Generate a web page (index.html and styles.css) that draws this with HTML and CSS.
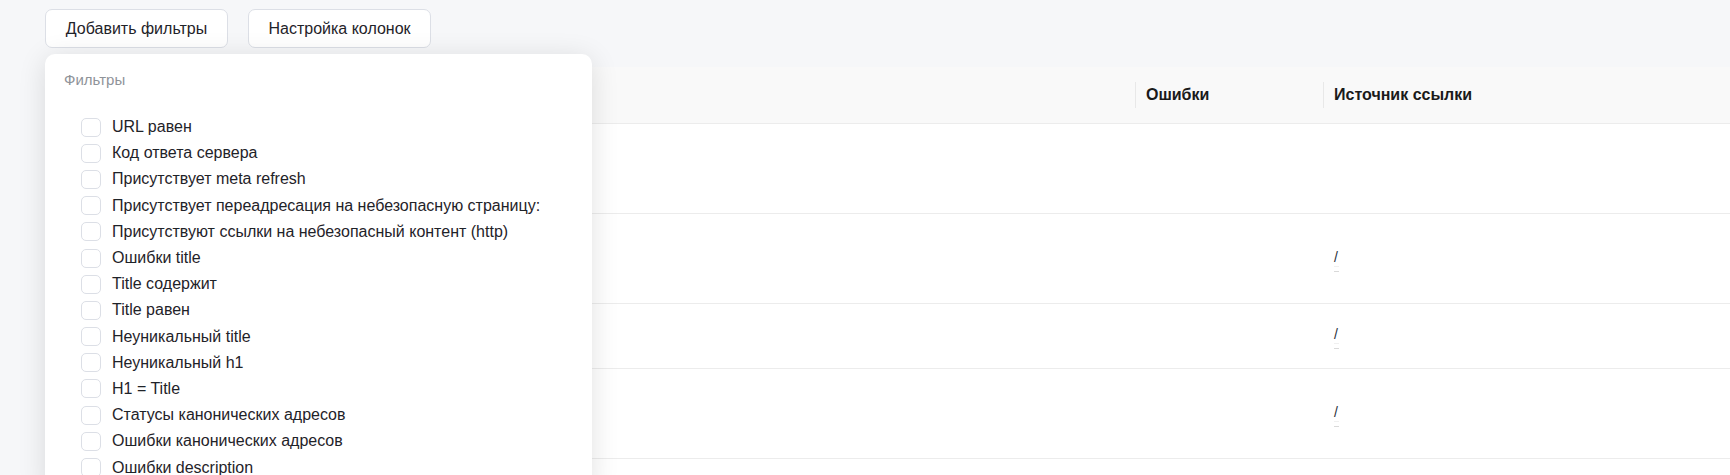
FILE: index.html
```html
<!DOCTYPE html>
<html lang="ru">
<head>
<meta charset="utf-8">
<title>Фильтры</title>
<link rel="stylesheet" href="styles.css">
</head>
<body>
<div class="page">
  <div class="toolbar">
    <button class="btn">Добавить фильтры</button>
    <button class="btn">Настройка колонок</button>
  </div>

  <div class="table">
    <div class="row head">
      <div class="cell c-main"></div>
      <div class="cell c-err"><span class="sep"></span>Ошибки</div>
      <div class="cell c-src"><span class="sep"></span>Источник ссылки</div>
    </div>
    <div class="row h90">
      <div class="cell c-main"></div>
      <div class="cell c-err"></div>
      <div class="cell c-src"></div>
    </div>
    <div class="row h90">
      <div class="cell c-main"></div>
      <div class="cell c-err"></div>
      <div class="cell c-src"><div class="src"><a class="slash">/</a><span class="tail"></span></div></div>
    </div>
    <div class="row h65">
      <div class="cell c-main"></div>
      <div class="cell c-err"></div>
      <div class="cell c-src"><div class="src"><a class="slash">/</a><span class="tail"></span></div></div>
    </div>
    <div class="row h90">
      <div class="cell c-main"></div>
      <div class="cell c-err"></div>
      <div class="cell c-src"><div class="src"><a class="slash">/</a><span class="tail"></span></div></div>
    </div>
    <div class="row h90">
      <div class="cell c-main"></div>
      <div class="cell c-err"></div>
      <div class="cell c-src"></div>
    </div>
  </div>

  <div class="dropdown">
    <div class="dd-title">Фильтры</div>
    <ul class="dd-list">
      <li class="opt"><span class="box"></span>URL равен</li>
      <li class="opt"><span class="box"></span>Код ответа сервера</li>
      <li class="opt"><span class="box"></span>Присутствует meta refresh</li>
      <li class="opt"><span class="box"></span>Присутствует переадресация на небезопасную страницу:</li>
      <li class="opt"><span class="box"></span>Присутствуют ссылки на небезопасный контент (http)</li>
      <li class="opt"><span class="box"></span>Ошибки title</li>
      <li class="opt"><span class="box"></span>Title содержит</li>
      <li class="opt"><span class="box"></span>Title равен</li>
      <li class="opt"><span class="box"></span>Неуникальный title</li>
      <li class="opt"><span class="box"></span>Неуникальный h1</li>
      <li class="opt"><span class="box"></span>H1 = Title</li>
      <li class="opt"><span class="box"></span>Статусы канонических адресов</li>
      <li class="opt"><span class="box"></span>Ошибки канонических адресов</li>
      <li class="opt"><span class="box"></span>Ошибки description</li>
    </ul>
  </div>
</div>
</body>
</html>
```

FILE: styles.css
```css
* { box-sizing: border-box; }

html, body {
  margin: 0;
  padding: 0;
  height: 100%;
  overflow: hidden;
}

body {
  background: #f6f7f9;
  font-family: "Liberation Sans", Arial, sans-serif;
  color: #1f2329;
}

.page {
  position: relative;
  padding: 9px 0 0 45px;
}

.toolbar {
  display: flex;
  gap: 20px;
}

.btn {
  width: 183px;
  height: 39px;
  padding: 0 16px;
  background: #ffffff;
  border: 1px solid #dcdfe6;
  border-radius: 7px;
  font-family: "Liberation Sans", Arial, sans-serif;
  font-size: 16px;
  color: #1f2329;
  cursor: pointer;
}

.table {
  margin-top: 19px;
  background: #ffffff;
}

.row {
  display: flex;
  border-bottom: 1px solid #ececec;
}

.row.head {
  height: 57px;
  background: #f9f9f9;
  font-weight: bold;
  font-size: 16px;
  color: #1a1a1a;
}

.row.h90 { height: 90px; }
.row.h65 { height: 65px; }

.cell {
  position: relative;
  display: flex;
  align-items: center;
  padding: 0 11px;
}

.c-main { width: 1090px; }
.c-err { width: 188px; }
.c-src { flex: 1; }

.sep {
  position: absolute;
  left: 0;
  top: 15px;
  width: 1px;
  height: 26px;
  background: #e8e8e8;
}

.src {
  display: flex;
  flex-direction: column;
  align-items: flex-start;
  padding-top: 4px;
}

.slash {
  font-size: 14px;
  line-height: 14px;
  color: #2a2f3a;
}

.tail {
  display: block;
  width: 5px;
  height: 6px;
  margin-top: 2px;
  border-top: 1px solid #f0f0f0;
  border-bottom: 1px solid #d9d9d9;
}

.dropdown {
  position: absolute;
  left: 45px;
  top: 54px;
  width: 547px;
  height: 440px;
  background: #ffffff;
  border-radius: 10px;
  box-shadow: 0 4px 28px rgba(0, 0, 0, 0.12);
  padding: 16px 0 0 19px;
  overflow: hidden;
}

.dd-title {
  font-size: 15px;
  line-height: 20px;
  color: #8f9399;
}

.dd-list {
  list-style: none;
  margin: 24px 0 0 0;
  padding: 0 0 0 17px;
}

.opt {
  display: flex;
  align-items: center;
  height: 26.2px;
  font-size: 16px;
  color: #1f2329;
}

.box {
  width: 20px;
  height: 19px;
  margin-right: 11px;
  border: 1px solid #dcdfe6;
  border-radius: 5px;
  background: #ffffff;
  flex-shrink: 0;
}
```
